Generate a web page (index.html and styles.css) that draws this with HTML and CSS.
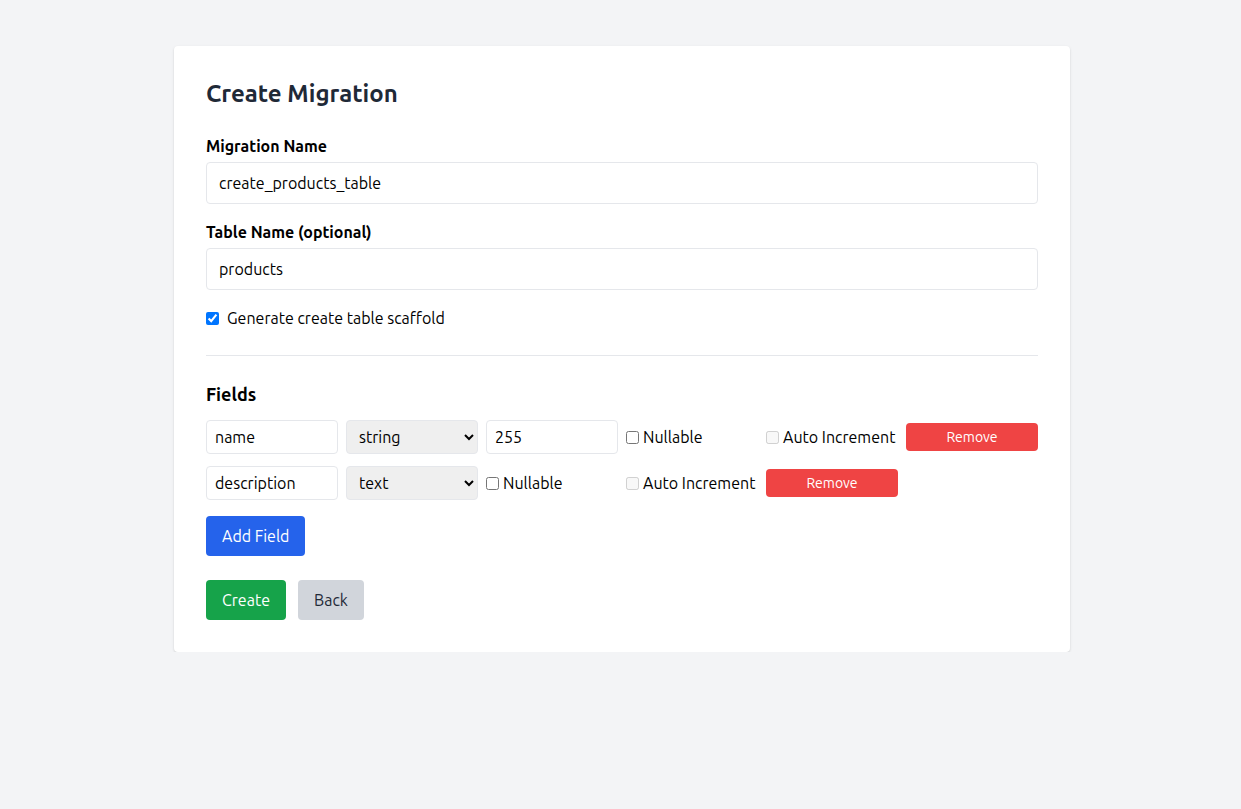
FILE: index.html
```
<!DOCTYPE html>
<html>
<head>
<meta charset="utf-8">
<link rel="stylesheet" href="styles.css">
</head>
<body>
<div class="page">
  <div class="card">
    <h1 class="title">Create Migration</h1>
    <div class="group">
      <label class="label">Migration Name</label>
      <input class="input" type="text" value="create_products_table">
    </div>
    <div class="group">
      <label class="label">Table Name (optional)</label>
      <input class="input" type="text" value="products">
    </div>
    <label class="check-row"><input type="checkbox" checked> Generate create table scaffold</label>
    <hr class="divider">
    <h2 class="subtitle">Fields</h2>
    <div class="fields">
      <div class="field-row">
        <input class="finput" type="text" value="name">
        <select class="fselect"><option>string</option></select>
        <input class="finput" type="text" value="255">
        <label class="fcheck"><input type="checkbox">Nullable</label>
        <label class="fcheck"><input type="checkbox" disabled>Auto Increment</label>
        <button class="btn-remove">Remove</button>
      </div>
      <div class="field-row">
        <input class="finput" type="text" value="description">
        <select class="fselect"><option>text</option></select>
        <label class="fcheck"><input type="checkbox">Nullable</label>
        <label class="fcheck"><input type="checkbox" disabled>Auto Increment</label>
        <button class="btn-remove">Remove</button>
      </div>
    </div>
    <button class="btn btn-blue">Add Field</button>
    <div class="actions">
      <button class="btn btn-green">Create</button>
      <button class="btn btn-gray">Back</button>
    </div>
  </div>
</div>
</body>
</html>
```
FILE: styles.css
```
* { box-sizing: border-box; }
html, body { margin: 0; padding: 0; }
body {
  background: #f3f4f6;
  font-family: "Ubuntu", "Noto Sans", "Open Sans", sans-serif;
  color: #111827;
  font-size: 16px;
  line-height: 24px;
}
.page { padding: 46px 0 0 3px; }
.card {
  width: 896px;
  margin: 0 auto;
  background: #fff;
  border-radius: 4px;
  box-shadow: 0 1px 3px rgba(0,0,0,0.1), 0 1px 2px rgba(0,0,0,0.06);
  padding: 32px;
}
.title {
  margin: 0 0 24px;
  font-size: 24px;
  line-height: 32px;
  font-weight: 700;
  color: #1f2937;
}
.group { margin-bottom: 16px; }
.label {
  display: block;
  font-weight: 600;
  font-size: 16px;
  line-height: 24px;
  margin-bottom: 4px;
  color: #000;
}
.input {
  display: block;
  width: 100%;
  height: 42px;
  padding: 8px 12px;
  border: 1px solid #e5e7eb;
  border-radius: 4px;
  font: inherit;
  color: #000;
}
.check-row {
  display: flex;
  align-items: center;
  gap: 8px;
  line-height: 24px;
  color: #000;
}
.check-row input { margin: 0; width: 13px; height: 13px; }
.divider {
  border: 0;
  border-top: 1px solid #e5e7eb;
  margin: 25px 0 24px;
}
.subtitle {
  margin: 0 0 12px;
  font-size: 18px;
  line-height: 28px;
  font-weight: 700;
  color: #000;
}
.fields { display: flex; flex-direction: column; gap: 12px; margin-bottom: 16px; }
.field-row {
  display: grid;
  grid-template-columns: repeat(6, 1fr);
  gap: 8px;
  align-items: center;
}
.finput {
  height: 34px;
  width: 100%;
  padding: 4px 8px;
  border: 1px solid #e5e7eb;
  border-radius: 4px;
  font: inherit;
  color: #000;
}
.fselect {
  height: 34px;
  width: 100%;
  padding: 4px 8px;
  border: 1px solid #e5e7eb;
  border-radius: 4px;
  background: #efefef;
  font: inherit;
  color: #000;
}
.fcheck {
  display: flex;
  align-items: center;
  gap: 4px;
  white-space: nowrap;
  color: #000;
}
.fcheck input { margin: 0; width: 13px; height: 13px; }
.btn-remove {
  height: 28px;
  border: 0;
  border-radius: 4px;
  background: #ef4444;
  color: #fff;
  font: inherit;
  font-size: 14px;
  cursor: pointer;
}
.btn {
  height: 40px;
  padding: 0 16px;
  border: 0;
  border-radius: 4px;
  font: inherit;
  cursor: pointer;
}
.btn-blue { background: #2563eb; color: #fff; }
.actions { display: flex; gap: 12px; margin-top: 24px; }
.btn-green { background: #16a34a; color: #fff; }
.btn-gray { background: #d1d5db; color: #1f2937; }
```
